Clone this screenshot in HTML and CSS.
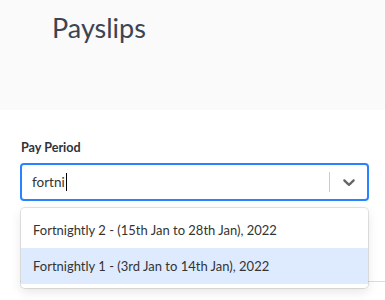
FILE: index.html
```html
<!DOCTYPE html>
<html>
<head>
<meta charset="utf-8">
<link rel="stylesheet" href="styles.css">
</head>
<body>
<header class="page-header">
  <h1 class="title">Payslips</h1>
</header>
<main class="content">
  <label class="field-label">Pay Period</label>
  <div class="select">
    <div class="control">
      <div class="value"><span class="typed">fortni</span><span class="caret"></span></div>
      <div class="indicators">
        <span class="separator"></span>
        <span class="chevron">
          <svg width="20" height="20" viewBox="0 0 20 20"><path d="M4.516 7.548c0.436-0.446 1.043-0.481 1.576 0l3.908 3.747 3.908-3.747c0.533-0.481 1.141-0.446 1.574 0 0.436 0.445 0.408 1.197 0 1.615-0.406 0.418-4.695 4.502-4.695 4.502-0.217 0.223-0.502 0.335-0.787 0.335s-0.57-0.112-0.789-0.335c0 0-4.287-4.084-4.695-4.502s-0.436-1.170 0-1.615z" fill="#666"/></svg>
        </span>
      </div>
    </div>
    <div class="menu">
      <div class="option">Fortnightly 2 - (15th Jan to 28th Jan), 2022</div>
      <div class="option focused">Fortnightly 1 - (3rd Jan to 14th Jan), 2022</div>
    </div>
  </div>
  <div class="rule"></div>
</main>
</body>
</html>
```
FILE: styles.css
```css
html, body {
  margin: 0;
  padding: 0;
  background: #ffffff;
  font-family: "Lato", "Liberation Sans", sans-serif;
}
body {
  min-height: 300px;
}
.page-header {
  background: #fafafa;
  height: 110px;
  box-sizing: border-box;
  padding: 12px 0 0 52px;
}
.title {
  margin: 0;
  font-size: 27px;
  font-weight: 400;
  color: #3d4451;
  line-height: 32px;
}
.content {
  padding: 29px 16px 0 20px;
}
.field-label {
  display: block;
  font-size: 12.6px;
  font-weight: 700;
  color: #2f3338;
  line-height: 18px;
  margin: 0 0 6px 1px;
}
.select {
  position: relative;
}
.control {
  display: flex;
  align-items: center;
  height: 38px;
  box-sizing: border-box;
  border: 2px solid #2684ff;
  border-radius: 4px;
  background: #fff;
}
.value {
  flex: 1;
  display: flex;
  align-items: center;
  padding-left: 10px;
  font-size: 13.5px;
  color: #333;
}
.caret {
  display: inline-block;
  width: 1px;
  height: 18px;
  background: #000;
  margin-left: 1px;
}
.indicators {
  display: flex;
  align-items: center;
  height: 100%;
}
.separator {
  width: 1px;
  height: 20px;
  background: #cccccc;
}
.chevron {
  display: flex;
  padding: 0 8px 0 9px;
}
.menu {
  position: absolute;
  top: 45px;
  left: 1px;
  right: 1px;
  background: #fff;
  border-radius: 4px;
  box-shadow: 0 0 0 1px rgba(0,0,0,0.1), 0 4px 11px rgba(0,0,0,0.1);
  padding: 4px 0;
  z-index: 2;
}
.option {
  padding: 8px 12px;
  font-size: 13px;
  line-height: 20px;
  color: #333;
}
.option.focused {
  background: #deebff;
}
.rule {
  margin-top: 80px;
  margin-right: -16px;
  border-top: 1px solid #dddddd;
}
```
